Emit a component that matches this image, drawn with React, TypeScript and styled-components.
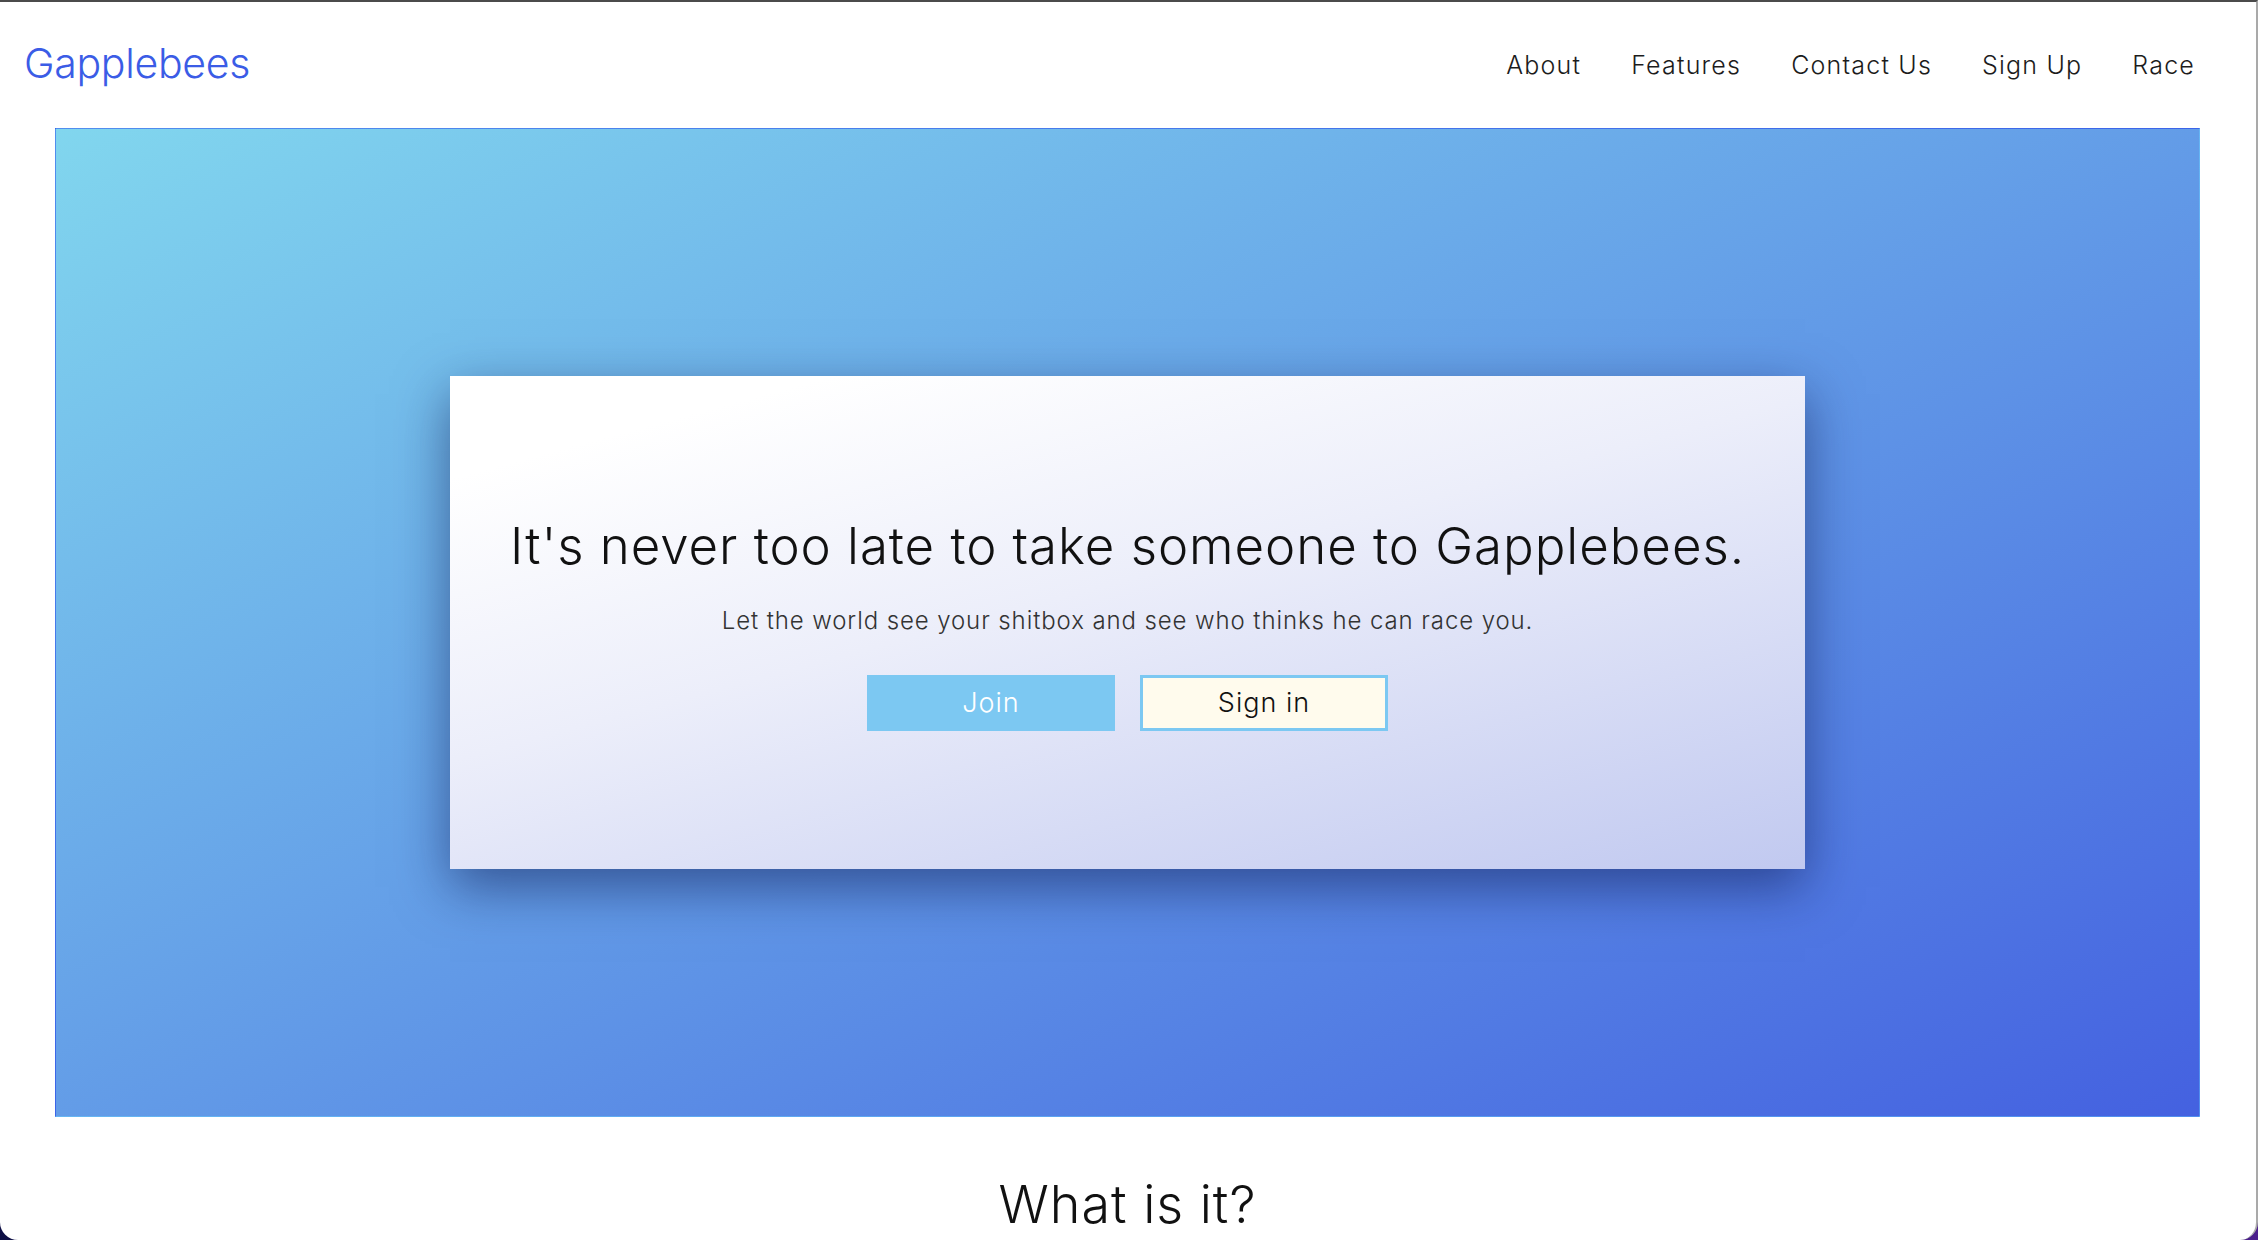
import React from 'react';
import styled, {createGlobalStyle} from 'styled-components'


const GlobalStyles = createGlobalStyle`
body,html {
   margin: 0;
   padding: 0;
   width: 100vw;
   height: 100vh;
   overflow: hidden;
   background: linear-gradient(90deg, #0e0f45 0%, #2a1a6a 60%, #4b1f8c 100%);
   font-family: Inter, "Noto Sans", sans-serif;
   font-weight: 300;
   color: #111;
}
`

const Window = styled.div`
box-sizing: border-box;
height: 1240px;
background: #fff;
border-top: 2px solid #4b4b4b;
border-right: 2px solid #a9a9a9;
border-radius: 0 0 18px 18px;
overflow: hidden;
display: flex;
flex-direction: column;
`

const Header = styled.header`
height: 126px;
display: flex;
align-items: center;
justify-content: space-between;
padding: 0 61px 0 24px;
`

const Logo = styled.a`
font-size: 41px;
font-weight: 300;
color: #3b5ce6;
letter-spacing: -0.3px;
text-decoration: none;
margin-top: -4px;
`

const Nav = styled.nav`
display: flex;
gap: 50px;
`

const NavLink = styled.a`
font-size: 25px;
font-weight: 300;
letter-spacing: 1.2px;
color: #1c1c1c;
text-decoration: none;
`

const Hero = styled.section`
box-sizing: border-box;
height: 989px;
margin: 0 56px 0 55px;
border: 1px solid rgba(40, 110, 255, 0.3);
background: linear-gradient(to bottom right, #81d6ee 0%, #66a2e8 45%, #4461e0 100%);
display: flex;
align-items: center;
justify-content: center;
`

const Card = styled.div`
width: 1355px;
height: 493px;
background: linear-gradient(165deg, #ffffff 12%, #eceefa 45%, #c1c9f0 100%);
box-shadow: 0 18px 50px rgba(12, 24, 80, 0.55);
display: flex;
flex-direction: column;
align-items: center;
justify-content: center;
`

const Headline = styled.h1`
margin: 0;
font-size: 51px;
font-weight: 300;
letter-spacing: 0.95px;
color: #111;
`

const Tagline = styled.p`
margin: 30px 0 0;
font-size: 24px;
font-weight: 300;
letter-spacing: 0.9px;
color: #333;
`

const Buttons = styled.div`
display: flex;
gap: 25px;
margin-top: 40px;
`

const Button = styled.button<{$filled?: boolean}>`
box-sizing: border-box;
width: 248px;
height: 56px;
font-family: inherit;
font-size: 27px;
font-weight: 300;
letter-spacing: 1px;
border-radius: 0;
cursor: pointer;
border: 3px solid #7cc8f2;
background: ${props => props.$filled ? '#7cc8f2' : '#fffbed'};
color: ${props => props.$filled ? '#fff' : '#111'};
`

const About = styled.section`
margin: 0 56px 0 55px;
padding-top: 56px;
text-align: center;
`

const SectionTitle = styled.h2`
margin: 0;
font-size: 52px;
font-weight: 300;
letter-spacing: 1px;
color: #111;
`

export default function App() {
  return (
  <>
    <GlobalStyles />
    <Window>
        <Header>
            <Logo href="#">Gapplebees</Logo>
            <Nav>
                <NavLink href="#">About</NavLink>
                <NavLink href="#">Features</NavLink>
                <NavLink href="#">Contact Us</NavLink>
                <NavLink href="#">Sign Up</NavLink>
                <NavLink href="#">Race</NavLink>
            </Nav>
        </Header>
        <Hero>
            <Card>
                <Headline>It's never too late to take someone to Gapplebees.</Headline>
                <Tagline>Let the world see your shitbox and see who thinks he can race you.</Tagline>
                <Buttons>
                    <Button $filled>Join</Button>
                    <Button>Sign in</Button>
                </Buttons>
            </Card>
        </Hero>
        <About>
            <SectionTitle>What is it?</SectionTitle>
        </About>
    </Window>
  </>
  );
}
